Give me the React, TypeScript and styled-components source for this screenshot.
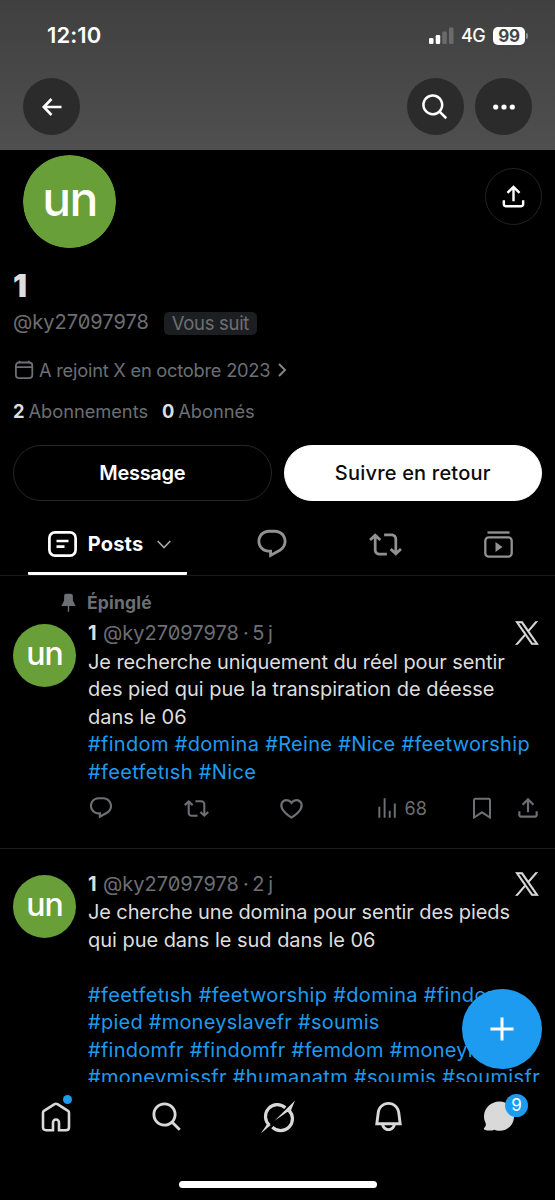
import React from "react";
import styled, { createGlobalStyle } from "styled-components";

const Global = createGlobalStyle`
  * { box-sizing: border-box; }
  body { margin: 0; background: #000; }
`;

const BLUE = "#1d9bf0";
const MUTED = "#6c6f73";
const TEXT = "#dedede";

const Screen = styled.div`
  width: 555px;
  height: 1200px;
  overflow: hidden;
  background: #000;
  color: ${TEXT};
  font-family: Inter, "Liberation Sans", sans-serif;
  display: flex;
  flex-direction: column;
  position: relative;
`;

const Banner = styled.header`
  height: 150px;
  flex: none;
  background: linear-gradient(#404040, #4f4f4f);
`;

const StatusBar = styled.div`
  height: 78px;
  padding: 21px 27px 0 47px;
  display: flex;
  justify-content: space-between;
  align-items: flex-start;
  color: #fff;
`;

const Clock = styled.div`
  font-size: 22px;
  line-height: 29px;
  font-weight: 600;
  letter-spacing: 0.1px;
`;

const StatusIcons = styled.div`
  height: 29px;
  display: flex;
  align-items: center;
`;

const Network = styled.span`
  font-size: 18px;
  font-weight: 500;
  line-height: 30px;
  letter-spacing: -0.6px;
  margin: 1px 8px 0 7px;
`;

const Battery = styled.div`
  width: 32px;
  height: 18px;
  border-radius: 5px;
  background: #fff;
  color: #444;
  font-size: 17px;
  line-height: 18px;
  font-weight: 700;
  letter-spacing: -0.4px;
  text-align: center;
`;

const BatteryTip = styled.div`
  width: 2px;
  height: 6px;
  margin-left: 1px;
  border-radius: 0 2px 2px 0;
  background: #8c8c8c;
`;

const HeaderActions = styled.div`
  display: flex;
  gap: 11.5px;
  padding: 0 23px;
`;

const RoundButton = styled.button<{ $outlined?: boolean; $push?: boolean }>`
  width: 57px;
  height: 57px;
  padding: 0;
  border-radius: 50%;
  border: ${(p) => (p.$outlined ? "1px solid #222325" : "0")};
  background: ${(p) => (p.$outlined ? "transparent" : "#2b2b2b")};
  color: #fff;
  display: flex;
  align-items: center;
  justify-content: center;
  margin-right: ${(p) => (p.$push ? "auto" : "0")};
`;

const Profile = styled.section`
  height: 351px;
  flex: none;
  padding: 0 13px;
  display: flex;
  flex-direction: column;
`;

const ProfileTop = styled.div`
  display: flex;
  justify-content: space-between;
  align-items: flex-start;
  height: 117px;
  padding-left: 5px;
`;

const Avatar = styled.div<{ $large?: boolean }>`
  flex: none;
  width: ${(p) => (p.$large ? 103 : 63)}px;
  height: ${(p) => (p.$large ? 103 : 63)}px;
  border: ${(p) => (p.$large ? "5px solid #000" : "0")};
  margin-top: ${(p) => (p.$large ? "-0.5px" : "0")};
  border-radius: 50%;
  background: #689f38;
  background-clip: padding-box;
  color: #fff;
  font-family: Inter, sans-serif;
  font-weight: 500;
  font-size: ${(p) => (p.$large ? 48 : 32)}px;
  line-height: ${(p) => (p.$large ? 87 : 59)}px;
  letter-spacing: ${(p) => (p.$large ? -1.6 : -1)}px;
  text-align: center;
`;

const ShareWrap = styled.div`
  padding-top: 17.5px;
`;

const DisplayName = styled.h1`
  margin: 0;
  font-size: 31px;
  line-height: 38px;
  font-weight: 900;
`;

const HandleRow = styled.div`
  display: flex;
  align-items: center;
  height: 34px;
  gap: 15px;
`;

const Handle = styled.span`
  color: ${MUTED};
  font-size: 20px;
  font-weight: 400;
  line-height: 26px;
  font-feature-settings: "zero" 1;
  white-space: nowrap;
`;

const Age = styled.span`
  color: ${MUTED};
  font-size: 20px;
  margin-left: 4px;
  word-spacing: -2px;
  white-space: nowrap;
`;

const FollowsBadge = styled.span`
  width: 93px;
  height: 23px;
  margin-top: 3px;
  border-radius: 5px;
  background: #1c1e21;
  color: ${MUTED};
  font-size: 18.5px;
  line-height: 23px;
  text-align: center;
  letter-spacing: -0.3px;
  white-space: nowrap;
`;

const MetaRow = styled.div<{ $top: number; $ls: number }>`
  display: flex;
  align-items: center;
  height: 26px;
  margin-top: ${(p) => p.$top}px;
  color: ${MUTED};
  font-size: 18.3px;
  letter-spacing: ${(p) => p.$ls}px;
  white-space: nowrap;
`;

const Count = styled.b`
  color: ${TEXT};
  margin-right: 4px;
`;

const CountLabel = styled.span`
  margin-right: 14px;
`;

const Buttons = styled.div`
  display: flex;
  gap: 12px;
  margin-top: auto;
`;

const PillButton = styled.button<{ $filled?: boolean }>`
  flex: 1;
  height: 56px;
  border-radius: 28px;
  border: 1px solid ${(p) => (p.$filled ? "#fff" : "#242628")};
  background: ${(p) => (p.$filled ? "#fff" : "transparent")};
  color: ${(p) => (p.$filled ? "#0b0b0b" : "#fff")};
  font-family: inherit;
  font-size: 20px;
  font-weight: ${(p) => (p.$filled ? 500 : 600)};
  letter-spacing: ${(p) => (p.$filled ? 0.2 : -0.3)}px;
`;

const Tabs = styled.nav`
  height: 75px;
  flex: none;
  display: grid;
  grid-template-columns: 215px 114px 112px 114px;
  border-bottom: 1px solid #17191b;
  color: #929292;
`;

const Tab = styled.div<{ $active?: boolean }>`
  display: flex;
  align-items: center;
  justify-content: center;
  height: 74px;
  padding-top: ${(p) => (p.$active ? 15 : 12)}px;
  padding-left: ${(p) => (p.$active ? 4 : 0)}px;
  margin: 0 ${(p) => (p.$active ? 28 : 0)}px;
  border-bottom: ${(p) => (p.$active ? "3px solid #fff" : "0")};
  border-radius: 1px;
  color: ${(p) => (p.$active ? "#fff" : "inherit")};
`;

const TabLabel = styled.span`
  font-size: 20px;
  font-weight: 700;
  letter-spacing: 0.2px;
  margin: 0 14px 0 11px;
`;

const Feed = styled.main`
  height: 506px;
  flex: none;
  overflow: hidden;
`;

const Post = styled.article<{ $h: number; $pt: number }>`
  height: ${(p) => p.$h}px;
  padding: ${(p) => p.$pt}px 13px 0;
  border-bottom: 1px solid #1d1f21;
`;

const Pinned = styled.div`
  display: flex;
  align-items: center;
  gap: 8px;
  height: 26px;
  padding: 0 0 4px 45px;
  color: ${MUTED};
  font-size: 17.5px;
  font-weight: 700;
  letter-spacing: 0.2px;
`;

const PostBody = styled.div`
  display: flex;
  gap: 12px;
`;

const AvatarCol = styled.div`
  padding-top: 6.5px;
`;

const Content = styled.div`
  flex: 1;
  min-width: 0;
`;

const NameRow = styled.div`
  display: flex;
  align-items: center;
  height: 31px;
`;

const Name = styled.b`
  font-size: 20px;
  width: 15px;
`;

const LogoSlot = styled.span`
  margin-left: auto;
  margin-right: 3px;
  height: 24px;
  color: ${TEXT};
`;

const Line = styled.p<{ $tag?: boolean; $ls?: number }>`
  margin: 0;
  height: 27.5px;
  line-height: 27.5px;
  font-size: 20px;
  letter-spacing: ${(p) => p.$ls ?? 0}px;
  color: ${(p) => (p.$tag ? BLUE : TEXT)};
  white-space: nowrap;
`;

const Actions = styled.div`
  display: grid;
  grid-template-columns: 95.5px 94.5px 95.5px 98.5px 42.5px 26px;
  align-items: center;
  height: 28px;
  margin-top: 8px;
  color: ${MUTED};
`;

const Action = styled.span`
  display: flex;
  align-items: center;
  gap: 5px;
  font-size: 18px;
`;

const Fab = styled.button`
  position: absolute;
  left: 462px;
  top: 989px;
  width: 80px;
  height: 80px;
  padding: 0;
  border: 0;
  border-radius: 50%;
  background: ${BLUE};
  display: flex;
  align-items: center;
  justify-content: center;
`;

const BottomNav = styled.nav`
  height: 69px;
  flex: none;
  display: grid;
  grid-template-columns: repeat(5, 1fr);
  color: #d9d9d9;
`;

const NavItem = styled.div`
  display: flex;
  align-items: center;
  justify-content: center;
`;

const IconBox = styled.div`
  position: relative;
  display: flex;
`;

const Dot = styled.span`
  position: absolute;
  right: -1px;
  top: -7px;
  width: 9px;
  height: 9px;
  border-radius: 50%;
  background: ${BLUE};
`;

const Badge = styled.span`
  position: absolute;
  right: -12px;
  top: -7.5px;
  width: 23px;
  height: 23px;
  border-radius: 50%;
  background: ${BLUE};
  color: #fff;
  font-size: 17px;
  line-height: 23px;
  text-align: center;
`;

const HomeIndicator = styled.div`
  width: 198px;
  height: 7px;
  margin: 30px auto 0;
  border-radius: 4px;
  background: #fff;
`;

const paths = {
  reply:
    "M1.751 10c0-4.42 3.584-8 8.005-8h4.366c4.49 0 8.129 3.64 8.129 8.13 0 2.96-1.607 5.68-4.196 7.11l-8.054 4.46v-3.69h-.067c-4.49.1-8.183-3.51-8.183-8.01zm8.005-6c-3.317 0-6.005 2.69-6.005 6 0 3.37 2.77 6.08 6.138 6.01l.351-.01h1.761v2.3l5.087-2.81c1.951-1.08 3.163-3.13 3.163-5.36 0-3.39-2.744-6.13-6.129-6.13H9.756z",
  repost:
    "M4.5 3.88l4.432 4.14-1.364 1.46L5.5 7.55V16c0 1.1.896 2 2 2H13v2H7.5c-2.209 0-4-1.79-4-4V7.55L1.432 9.48.068 8.02 4.5 3.88zM16.5 6H11V4h5.5c2.209 0 4 1.79 4 4v8.45l2.068-1.93 1.364 1.46-4.432 4.14-4.432-4.14 1.364-1.46 2.068 1.93V8c0-1.1-.896-2-2-2z",
  like: "M16.697 5.5c-1.222-.06-2.679.51-3.89 2.16l-.805 1.09-.806-1.09C9.984 6.01 8.526 5.44 7.304 5.5c-1.243.07-2.349.78-2.91 1.91-.552 1.12-.633 2.78.479 4.82 1.074 1.97 3.257 4.27 7.129 6.61 3.87-2.34 6.052-4.64 7.126-6.61 1.111-2.04 1.03-3.7.477-4.82-.561-1.13-1.666-1.84-2.908-1.91zm4.187 7.69c-1.351 2.48-4.001 5.12-8.379 7.67l-.503.3-.504-.3c-4.379-2.55-7.029-5.19-8.382-7.67-1.36-2.5-1.41-4.86-.514-6.67.887-1.79 2.647-2.91 4.601-3.01 1.651-.09 3.368.56 4.798 2.01 1.429-1.45 3.146-2.1 4.796-2.01 1.954.1 3.714 1.22 4.601 3.01.896 1.81.846 4.17-.514 6.67z",
  views: "M8.900 21V3h1.800v18H8.900zM18.300 21V7.800H20.100V21h-1.800zM4 21V10.800h1.800V21H4zm9.600 0v-6.400h1.800V21h-1.800z",
  share:
    "M12 2.59l5.7 5.7-1.41 1.42L13 6.41V16h-2V6.41l-3.3 3.3-1.41-1.42L12 2.59zM21 15l-.02 3.51c0 1.38-1.12 2.49-2.5 2.49H5.5C4.11 21 3 19.88 3 18.5V15h2v3.5c0 .28.22.5.5.5h12.98c.28 0 .5-.22.5-.5L19 15h2z",
  search:
    "M10.25 3.75c-3.59 0-6.5 2.91-6.5 6.5s2.91 6.5 6.5 6.5c1.795 0 3.419-.726 4.596-1.904 1.178-1.177 1.904-2.801 1.904-4.596 0-3.59-2.91-6.5-6.5-6.5zm-8.5 6.5c0-4.694 3.806-8.5 8.5-8.5s8.5 3.806 8.5 8.5c0 1.986-.682 3.815-1.824 5.262l4.781 4.781-1.414 1.414-4.781-4.781c-1.447 1.142-3.276 1.824-5.262 1.824-4.694 0-8.500-3.806-8.500-8.500z",
  pin: "M7 4.500C7 3.120 8.120 2 9.500 2h5C15.880 2 17 3.120 17 4.500v5.260L20.120 16H12.800v6.500h-1.600V16H3.880L7 9.760V4.500z",
  bell: "M19.993 9.042C19.48 5.017 16.054 2 11.996 2s-7.490 3.021-7.999 7.051L2.866 18H7.100c.463 2.282 2.481 4 4.900 4s4.437-1.718 4.900-4h4.236l-1.143-8.958zM12 20c-1.306 0-2.417-.835-2.829-2h5.658c-.412 1.165-1.523 2-2.829 2zm-6.866-4l.847-6.698C6.364 6.272 8.941 4 11.996 4s5.627 2.268 6.013 5.295L18.864 16H5.134z",
};

const Glyph = ({ name, size }: { name: keyof typeof paths; size: number }) => (
  <svg width={size} height={size} viewBox="0 0 24 24" fill="currentColor">
    <path d={paths[name]} />
  </svg>
);

const XLogo = () => (
  <svg
    width="24"
    height="24"
    viewBox="-20 -20 1240 1267"
    fill="currentColor"
    stroke="currentColor"
    strokeWidth="36"
  >
    <path d="M714.163 519.284L1160.890 0H1055.030L667.137 450.887L357.328 0H0L468.492 681.821L0 1226.370H105.866L515.491 750.218L842.672 1226.370H1200L714.137 519.284ZM569.165 687.828L521.697 619.934L144.011 79.694H306.615L611.412 515.685L658.880 583.579L1055.080 1150.300H892.476L569.165 687.854Z" />
  </svg>
);

const PostHeader = ({ age }: { age: string }) => (
  <NameRow>
    <Name>1</Name>
    <Handle>@ky27097978</Handle>
    <Age>· {age}</Age>
    <LogoSlot>
      <XLogo />
    </LogoSlot>
  </NameRow>
);

export default function App() {
  return (
    <Screen>
      <Global />
      <Banner>
        <StatusBar>
          <Clock>12:10</Clock>
          <StatusIcons>
            <svg width="25" height="17" viewBox="0 0 25 17">
              <rect x="0" y="11" width="4.500" height="6" rx="1.300" fill="#fff" />
              <rect x="6.700" y="8" width="4.500" height="9" rx="1.300" fill="#fff" />
              <rect x="13.300" y="4.500" width="4.500" height="12.500" rx="1.300" fill="#6b6b6b" />
              <rect x="20" y="0.500" width="4.500" height="16.500" rx="1.300" fill="#6b6b6b" />
            </svg>
            <Network>4G</Network>
            <Battery>99</Battery>
            <BatteryTip />
          </StatusIcons>
        </StatusBar>
        <HeaderActions>
          <RoundButton $push>
            <svg width="20" height="18" viewBox="0 0 20 18" fill="none" stroke="#fff" strokeWidth="2.600">
              <path d="M9.500 1L1.800 9l7.700 8M2 9h17.500" />
            </svg>
          </RoundButton>
          <RoundButton>
            <Glyph name="search" size={30} />
          </RoundButton>
          <RoundButton>
            <svg width="22" height="6" viewBox="0 0 22 6" fill="#fff">
              <circle cx="2.700" cy="3" r="2.600" />
              <circle cx="11" cy="3" r="2.600" />
              <circle cx="19.300" cy="3" r="2.600" />
            </svg>
          </RoundButton>
        </HeaderActions>
      </Banner>

      <Profile>
        <ProfileTop>
          <Avatar $large>un</Avatar>
          <ShareWrap>
            <RoundButton $outlined>
              <Glyph name="share" size={29} />
            </RoundButton>
          </ShareWrap>
        </ProfileTop>
        <DisplayName>1</DisplayName>
        <HandleRow>
          <Handle>@ky27097978</Handle>
          <FollowsBadge>Vous suit</FollowsBadge>
        </HandleRow>
        <MetaRow $top={18} $ls={-0.24}>
          <svg width="26" height="20" viewBox="0 0 26 20" fill="none" stroke="currentColor" strokeWidth="1.800">
            <rect x="2.900" y="2.500" width="16.400" height="15.700" rx="3.200" />
            <path d="M2.900 7.200h16.400M6.500 0.700v2.500M15.700 0.700v2.500" />
          </svg>
          A rejoint X en octobre 2023
          <svg width="18" height="16" viewBox="0 0 18 16" fill="none" stroke="#85888b" strokeWidth="1.900">
            <path d="M9 2l6 6-6 6" />
          </svg>
        </MetaRow>
        <MetaRow $top={15} $ls={-0.04}>
          <Count>2</Count>
          <CountLabel>Abonnements</CountLabel>
          <Count>0</Count>
          <CountLabel>Abonnés</CountLabel>
        </MetaRow>
        <Buttons>
          <PillButton>Message</PillButton>
          <PillButton $filled>Suivre en retour</PillButton>
        </Buttons>
      </Profile>

      <Tabs>
        <Tab $active>
          <svg width="29" height="26" viewBox="0 0 29 26" fill="none" stroke="#fff" strokeWidth="2.700">
            <rect x="1.400" y="1.400" width="26.200" height="23.200" rx="5.500" />
            <path d="M8.500 10h12M8.500 15.700h8" />
          </svg>
          <TabLabel>Posts</TabLabel>
          <svg width="14" height="9" viewBox="0 0 14 9" fill="none" stroke="#a5a5a5" strokeWidth="1.700">
            <path d="M0.700 1L7 7.500 13.300 1" />
          </svg>
        </Tab>
        <Tab>
          <Glyph name="reply" size={34} />
        </Tab>
        <Tab>
          <Glyph name="repost" size={33} />
        </Tab>
        <Tab>
          <svg width="29" height="27" viewBox="0 0 29 27" fill="none" stroke="currentColor" strokeWidth="2.300">
            <path d="M3.500 1.500h22" />
            <rect x="1.300" y="6.300" width="26.400" height="19.400" rx="3.500" />
            <path d="M11.500 11v10l7-5z" fill="currentColor" stroke="none" />
          </svg>
        </Tab>
      </Tabs>

      <Feed>
        <Post $h={273} $pt={15.5}>
          <Pinned>
            <Glyph name="pin" size={21} />
            Épinglé
          </Pinned>
          <PostBody>
            <AvatarCol>
              <Avatar>un</Avatar>
            </AvatarCol>
            <Content>
              <PostHeader age="5 j" />
              <Line $ls={-0.09}>Je recherche uniquement du réel pour sentir</Line>
              <Line>des pied qui pue la transpiration de déesse</Line>
              <Line>dans le 06</Line>
              <Line $tag $ls={0.32}>#findom #domina #Reine #Nice #feetworship</Line>
              <Line $tag $ls={0.34}>#feetfetısh #Nice</Line>
              <Actions>
                <Action>
                  <Glyph name="reply" size={26} />
                </Action>
                <Action>
                  <Glyph name="repost" size={25} />
                </Action>
                <Action>
                  <Glyph name="like" size={27} />
                </Action>
                <Action>
                  <Glyph name="views" size={26} />
                  68
                </Action>
                <Action>
                  <svg width="20" height="22" viewBox="0 0 20 22" fill="none" stroke="currentColor" strokeWidth="2">
                    <path d="M2 20.500V3.200Q2 1.700 3.500 1.700h13Q18 1.700 18 3.200V20.500l-8-5.200z" />
                  </svg>
                </Action>
                <Action>
                  <Glyph name="share" size={26} />
                </Action>
              </Actions>
            </Content>
          </PostBody>
        </Post>
        <Post $h={300} $pt={19}>
          <PostBody>
            <AvatarCol>
              <Avatar>un</Avatar>
            </AvatarCol>
            <Content>
              <PostHeader age="2 j" />
              <Line $ls={-0.12}>Je cherche une domina pour sentir des pieds</Line>
              <Line $ls={-0.03}>qui pue dans le sud dans le 06</Line>
              <Line />
              <Line $tag $ls={0.33}>#feetfetısh #feetworship #domina #findom</Line>
              <Line $tag $ls={0.24}>#pied #moneyslavefr #soumis</Line>
              <Line $tag $ls={0.27}>#findomfr #findomfr #femdom #moneymiss</Line>
              <Line $tag $ls={0.33}>#moneymissfr #humanatm #soumis #soumisfr</Line>
            </Content>
          </PostBody>
        </Post>
      </Feed>

      <Fab>
        <svg width="24" height="24" viewBox="0 0 24 24" stroke="#fff" strokeWidth="3">
          <path d="M12 0.500v23M0.500 12h23" />
        </svg>
      </Fab>

      <BottomNav>
        <NavItem>
          <IconBox>
            <svg width="30" height="30" viewBox="0 0 30 30" fill="none" stroke="currentColor" strokeWidth="2.600">
              <path d="M12 28.200H5Q2 28.200 2 25.200V10.800Q2 9.500 3 8.800L13.600 2.200Q15 1.300 16.400 2.200L27 8.800Q28 9.500 28 10.800V25.200Q28 28.200 25 28.200H18V20.500a3 3 0 0 0-6 0V28.200Z" />
            </svg>
            <Dot />
          </IconBox>
        </NavItem>
        <NavItem>
          <Glyph name="search" size={34} />
        </NavItem>
        <NavItem>
          <svg width="36" height="34" viewBox="0 0 36 34" fill="none" stroke="currentColor">
            <path d="M9.300 25.200A11.600 11.600 0 0 1 25.300 7.800" strokeWidth="3.200" />
            <path d="M29 10.500A11.600 11.600 0 0 1 12.300 27.200" strokeWidth="3.200" />
            <path d="M0.800 33.500L7.500 23.500l3.300 1.500zM35 0.500L14.500 20.800 27.300 12l3.200-.5Z" fill="currentColor" stroke="none" />
          </svg>
        </NavItem>
        <NavItem>
          <Glyph name="bell" size={35} />
        </NavItem>
        <NavItem>
          <IconBox>
            <svg width="33" height="31" viewBox="0 0 33 31" fill="currentColor">
              <path d="M16.500 0.500C25 0.500 31 7 31 15.200S25 29.800 16.500 29.800c-2 0-3.600-.4-5-1.100-2.600 1.100-6.800 1.200-10 0 -.9-.4-.9-1.400-.2-2 1.500-1.300 1.900-3.300 1.200-5C1.600 19.700 1 17.600 1 15.200 1 7 8 0.500 16.500 0.500z" />
            </svg>
            <Badge>9</Badge>
          </IconBox>
        </NavItem>
      </BottomNav>
      <HomeIndicator />
    </Screen>
  );
}
